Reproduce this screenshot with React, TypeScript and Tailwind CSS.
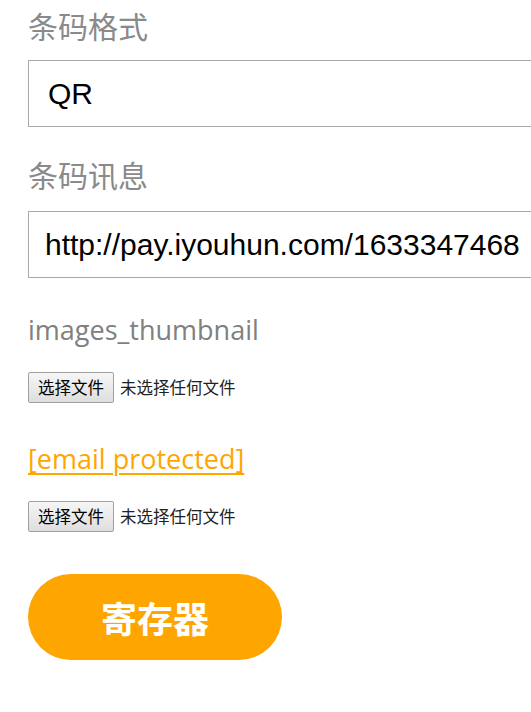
import React from "react";

function FileRow() {
  return (
    <div className="flex items-center font-['Noto_Sans_CJK_SC','Noto_Sans',sans-serif]">
      <div className="flex h-[31px] w-[86px] items-center justify-center rounded-[2px] border border-[#a0a0a0] bg-gradient-to-b from-[#f6f6f6] to-[#dedede] text-[16.5px] text-black">
        选择文件
      </div>
      <span className="ml-[6px] text-[16.5px] text-[#222]">未选择任何文件</span>
    </div>
  );
}

export default function App() {
  return (
    <div className="w-full overflow-hidden bg-white">
      <div className="flex flex-col items-start pl-[28px] pt-[2px]">
        <div className="text-[30px] leading-[46px] text-[#8a8a8a] font-['Noto_Sans_CJK_SC','Noto_Sans',sans-serif]">
          条码格式
        </div>
        <div className="mt-[12px] flex h-[67px] w-[560px] items-center border border-[#aaaaaa] pl-[19px] text-[30px] text-black font-['Liberation_Sans',Arial,sans-serif]">
          QR
        </div>
        <div className="mt-[24px] text-[30px] leading-[46px] text-[#8a8a8a] font-['Noto_Sans_CJK_SC','Noto_Sans',sans-serif]">
          条码讯息
        </div>
        <div className="mt-[14px] flex h-[67px] w-[560px] items-center border border-[#aaaaaa] pl-[16px] text-[30px] text-black font-['Liberation_Sans',Arial,sans-serif]">
          http://pay.iyouhun.com/1633347468
        </div>
        <div className="mt-[32px] text-[27px] leading-[40px] text-[#808080] font-['Open_Sans',sans-serif]">
          images_thumbnail
        </div>
        <div className="mt-[22px]">
          <FileRow />
        </div>
        <div className="mt-[36px] text-[27px] leading-[40px] font-['Open_Sans',sans-serif]">
          <a href="#" className="text-[#ffa500] underline decoration-2 underline-offset-[4px]">
            [email&#160;protected]
          </a>
        </div>
        <div className="mt-[22px]">
          <FileRow />
        </div>
        <button className="mt-[42px] flex h-[86px] w-[254px] items-center justify-center rounded-full bg-[#ffa500] text-[36px] font-bold text-white font-['Noto_Sans_CJK_SC','Noto_Sans',sans-serif]">
          寄存器
        </button>
      </div>
    </div>
  );
}
